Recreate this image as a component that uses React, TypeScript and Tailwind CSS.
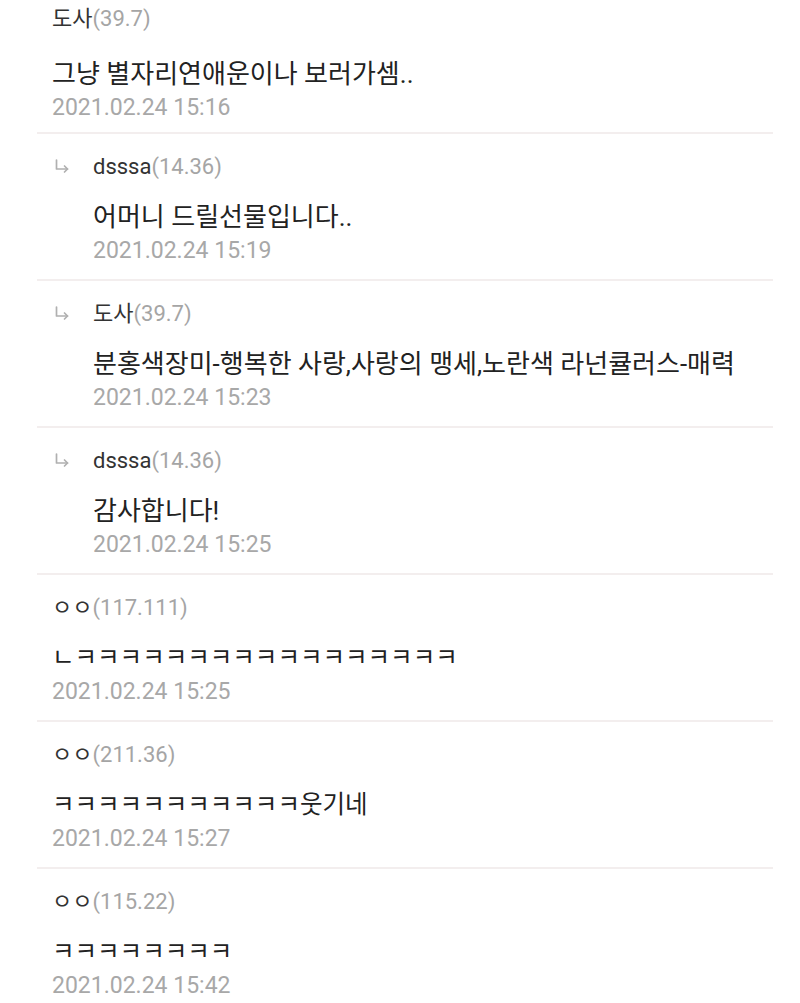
import React from 'react';

interface Comment {
  name: string;
  ip: string;
  text: string;
  date: string;
  reply?: boolean;
  jamo?: boolean;
}

const comments: Comment[] = [
  { name: '도사', ip: '(39.7)', text: '그냥 별자리연애운이나 보러가셈..', date: '2021.02.24 15:16' },
  { name: 'dsssa', ip: '(14.36)', text: '어머니 드릴선물입니다..', date: '2021.02.24 15:19', reply: true },
  { name: '도사', ip: '(39.7)', text: '분홍색장미-행복한 사랑,사랑의 맹세,노란색 라넌큘러스-매력', date: '2021.02.24 15:23', reply: true },
  { name: 'dsssa', ip: '(14.36)', text: '감사합니다!', date: '2021.02.24 15:25', reply: true },
  { name: 'ㅇㅇ', ip: '(117.111)', text: 'ㄴㅋㅋㅋㅋㅋㅋㅋㅋㅋㅋㅋㅋㅋㅋㅋㅋㅋ', date: '2021.02.24 15:25', jamo: true },
  { name: 'ㅇㅇ', ip: '(211.36)', text: 'ㅋㅋㅋㅋㅋㅋㅋㅋㅋㅋㅋ웃기네', date: '2021.02.24 15:27', jamo: true },
  { name: 'ㅇㅇ', ip: '(115.22)', text: 'ㅋㅋㅋㅋㅋㅋㅋㅋ', date: '2021.02.24 15:42', jamo: true },
];

// reply arrow (↳)
const ReplyArrow = () => (
  <svg width="16" height="16" viewBox="0 0 16 16" fill="none" stroke="#b0b0b0" strokeWidth="1.7" strokeLinecap="round" strokeLinejoin="round">
    <path d="M2.5 2v9h11" />
    <path d="M10.5 8l3 3-3 3" />
  </svg>
);

const CommentRow: React.FC<{ c: Comment; first: boolean; last: boolean }> = ({ c, first, last }) => (
  <div
    className={`ml-[37px] w-[736px] ${first ? 'h-[134px] pt-[2px]' : 'h-[147px] pt-[16px]'} ${
      last ? '' : 'border-b-2 border-[#f3eeee]'
    }`}
  >
    <div className={`flex ${c.reply ? 'pl-[17px]' : 'pl-[15px]'}`}>
      {c.reply && (
        <div className="w-[39px] h-[32px] flex items-center">
          <ReplyArrow />
        </div>
      )}
      <div className="flex flex-col">
        <div className="h-[32px] flex items-center text-[22px] text-[#333]">
          {c.name}
          <span className="text-[#a5a5a5]">{c.ip}</span>
        </div>
        <div
          className={`${first ? 'mt-[22px]' : 'mt-[17px]'} h-[36px] flex items-center ${
            c.jamo ? 'text-[24.5px]' : 'text-[26px]'
          } text-[#222]`}
        >
          {c.text}
        </div>
        <div className="h-[32px] flex items-center text-[23px] text-[#a8a8a8]">{c.date}</div>
      </div>
    </div>
  </div>
);

export default function App() {
  return (
    <div
      className="w-[800px] h-[1003px] bg-white overflow-hidden"
      style={{ fontFamily: "Roboto, 'Noto Sans CJK KR', sans-serif" }}
    >
      {comments.map((c, i) => (
        <CommentRow key={i} c={c} first={i === 0} last={i === comments.length - 1} />
      ))}
    </div>
  );
}
